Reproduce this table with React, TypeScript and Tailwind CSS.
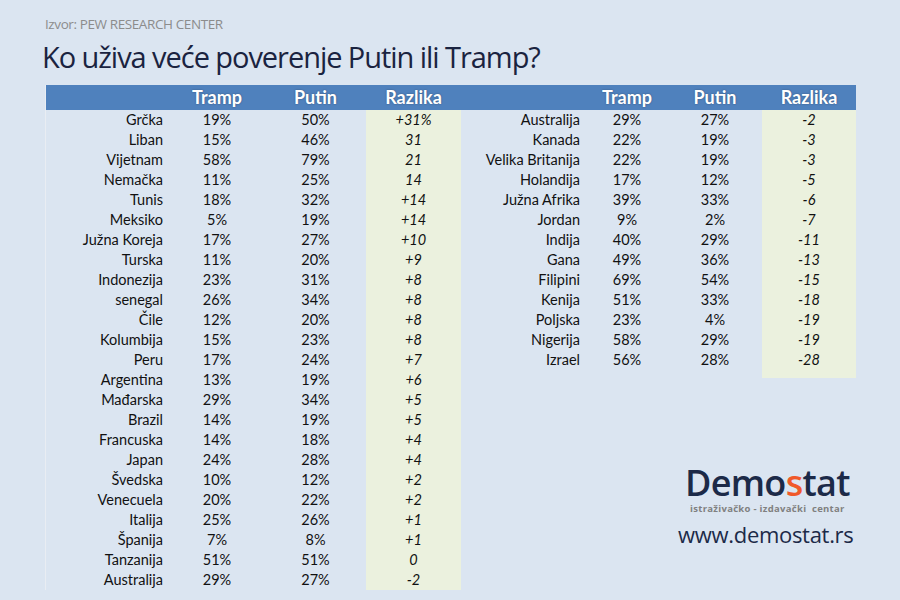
const left: [string, string, string, string][] = [
  ["Grčka", "19%", "50%", "+31%"],
  ["Liban", "15%", "46%", "31"],
  ["Vijetnam", "58%", "79%", "21"],
  ["Nemačka", "11%", "25%", "14"],
  ["Tunis", "18%", "32%", "+14"],
  ["Meksiko", "5%", "19%", "+14"],
  ["Južna Koreja", "17%", "27%", "+10"],
  ["Turska", "11%", "20%", "+9"],
  ["Indonezija", "23%", "31%", "+8"],
  ["senegal", "26%", "34%", "+8"],
  ["Čile", "12%", "20%", "+8"],
  ["Kolumbija", "15%", "23%", "+8"],
  ["Peru", "17%", "24%", "+7"],
  ["Argentina", "13%", "19%", "+6"],
  ["Mađarska", "29%", "34%", "+5"],
  ["Brazil", "14%", "19%", "+5"],
  ["Francuska", "14%", "18%", "+4"],
  ["Japan", "24%", "28%", "+4"],
  ["Švedska", "10%", "12%", "+2"],
  ["Venecuela", "20%", "22%", "+2"],
  ["Italija", "25%", "26%", "+1"],
  ["Španija", "7%", "8%", "+1"],
  ["Tanzanija", "51%", "51%", "0"],
  ["Australija", "29%", "27%", "-2"],
];

const right: [string, string, string, string][] = [
  ["Australija", "29%", "27%", "-2"],
  ["Kanada", "22%", "19%", "-3"],
  ["Velika Britanija", "22%", "19%", "-3"],
  ["Holandija", "17%", "12%", "-5"],
  ["Južna Afrika", "39%", "33%", "-6"],
  ["Jordan", "9%", "2%", "-7"],
  ["Indija", "40%", "29%", "-11"],
  ["Gana", "49%", "36%", "-13"],
  ["Filipini", "69%", "54%", "-15"],
  ["Kenija", "51%", "33%", "-18"],
  ["Poljska", "23%", "4%", "-19"],
  ["Nigerija", "58%", "29%", "-19"],
  ["Izrael", "56%", "28%", "-28"],
];

const headCls =
  "h-[25px] bg-[#4f81bd] text-white font-bold text-[18px] flex items-center justify-center [text-shadow:0_0_2px_rgba(0,0,0,0.35)]";
const cellCls = "h-[20px] flex items-center justify-center";

const App = () => {
  return (
    <div className="w-[900px] h-[600px] bg-[#dbe5f1] overflow-hidden text-[#111] font-['Lato','Open_Sans',sans-serif]">
      {/* Header texts */}
      <div className="pl-[45px] pt-[15px] text-[13.5px] text-[#8c8c8c] leading-[18px] font-['Open_Sans',sans-serif] tracking-[-0.4px]">
        Izvor: PEW RESEARCH CENTER
      </div>
      <h1 className="pl-[42px] pt-[6px] text-[29px] leading-[36px] text-[#1a2340] font-['Open_Sans',sans-serif] tracking-[-1.05px]">
        Ko uživa veće poverenje Putin ili Tramp?
      </h1>

      <div className="flex mt-[10px] ml-[45px]">
        {/* Left table */}
        <div className="grid grid-cols-[123px_96px_101px_95px] border-l border-[#e9edf3] text-[14.5px]">
          <div className={headCls}></div>
          <div className={headCls}>Tramp</div>
          <div className={headCls}>Putin</div>
          <div className={headCls}>Razlika</div>
          {left.map(([c, t, p, r], i) => (
            <div key={i} className="contents">
              <div className="h-[20px] flex items-center justify-end pr-[6px]">{c}</div>
              <div className={cellCls}>{t}</div>
              <div className={cellCls}>{p}</div>
              <div className={cellCls + " bg-[#ebf1de] italic"}>{r}</div>
            </div>
          ))}
        </div>

        {/* Right part */}
        <div className="flex flex-col">
          <div className="grid grid-cols-[125px_82px_94px_94px] text-[14.5px]">
            <div className={headCls}></div>
            <div className={headCls}>Tramp</div>
            <div className={headCls}>Putin</div>
            <div className={headCls}>Razlika</div>
            {right.map(([c, t, p, r], i) => (
              <div key={i} className="contents">
                <div className="h-[20px] flex items-center justify-end pr-[6px]">{c}</div>
                <div className={cellCls}>{t}</div>
                <div className={cellCls}>{p}</div>
                <div className={cellCls + " bg-[#ebf1de] italic"}>{r}</div>
              </div>
            ))}
            <div className="col-span-3 h-[8px]"></div>
            <div className="h-[8px] bg-[#ebf1de]"></div>
          </div>

          {/* Logo */}
          <div className="mt-[88px] ml-[217px] flex flex-col items-start">
            <div className="ml-[7px] text-[36px] leading-[34px] font-semibold tracking-[-0.7px] text-[#1c2a48] font-['Open_Sans',sans-serif]">
              Demo<span className="text-[#f0592a]">s</span>tat
            </div>
            <div className="ml-[12px] mt-[3px] text-[9.5px] leading-[12px] font-bold tracking-[0.3px] text-[#808080] font-['Open_Sans',sans-serif] whitespace-pre">
              istraživačko - izdavački  centar
            </div>
            <div className="mt-[6px] text-[22px] leading-[26px] text-[#1c2a48] font-['Open_Sans',sans-serif] tracking-[-0.3px]">
              www.demostat.rs
            </div>
          </div>
        </div>
      </div>
    </div>
  );
};

export default App;
